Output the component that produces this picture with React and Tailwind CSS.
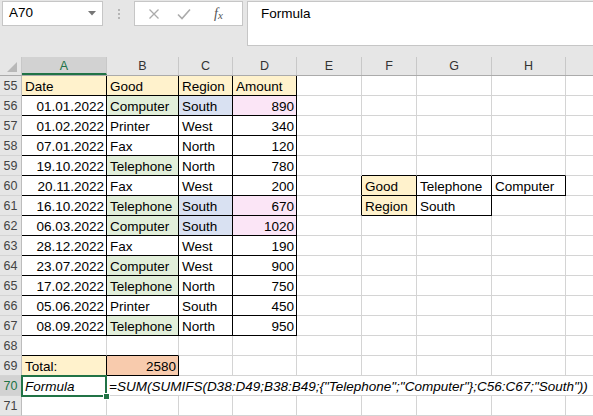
import React from 'react';

const W = ['w-[85px]', 'w-[72px]', 'w-[54px]', 'w-[64px]', 'w-[65px]', 'w-[55px]', 'w-[75px]', 'w-[74px]', 'w-[60px]'];
const LETTERS = ['A', 'B', 'C', 'D', 'E', 'F', 'G', 'H', ''];

const BG = {
  h: 'bg-[#FFF2CC]',
  g: 'bg-[#E2EFDA]',
  b: 'bg-[#D9E1F2]',
  p: 'bg-[#FBE5F6]',
  o: 'bg-[#F8CBAD]',
};

const DATA = {
  55: [['Date', 'h'], ['Good', 'h'], ['Region', 'h'], ['Amount', 'h']],
  56: [['01.01.2022'], ['Computer', 'g'], ['South', 'b'], ['890', 'p']],
  57: [['01.02.2022'], ['Printer'], ['West'], ['340']],
  58: [['07.01.2022'], ['Fax'], ['North'], ['120']],
  59: [['19.10.2022'], ['Telephone', 'g'], ['North'], ['780']],
  60: [['20.11.2022'], ['Fax'], ['West'], ['200'], [''], ['Good', 'h'], ['Telephone'], ['Computer']],
  61: [['16.10.2022'], ['Telephone', 'g'], ['South', 'b'], ['670', 'p'], [''], ['Region', 'h'], ['South']],
  62: [['06.03.2022'], ['Computer', 'g'], ['South', 'b'], ['1020', 'p']],
  63: [['28.12.2022'], ['Fax'], ['West'], ['190']],
  64: [['23.07.2022'], ['Computer', 'g'], ['West'], ['900']],
  65: [['17.02.2022'], ['Telephone', 'g'], ['North'], ['750']],
  66: [['05.06.2022'], ['Printer'], ['South'], ['450']],
  67: [['08.09.2022'], ['Telephone', 'g'], ['North'], ['950']],
  69: [['Total:', 'h'], ['2580', 'o', true]],
};

function borders(r, c) {
  let br = false;
  let bb = false;
  if (r >= 55 && r <= 67 && c <= 3) { br = true; bb = true; }
  if (r === 68 && c <= 1) bb = true;
  if (r === 69 && c <= 1) { br = true; bb = true; }
  if (r === 59 && c >= 5 && c <= 7) bb = true;
  if ((r === 60 || r === 61) && c === 4) br = true;
  if (r === 60 && c >= 5 && c <= 7) { br = true; bb = true; }
  if (r === 61 && (c === 5 || c === 6)) { br = true; bb = true; }
  return [br, bb];
}

function RowHeader({ n, active }) {
  return (
    <div
      className={
        'w-[22px] shrink-0 h-5 border-r border-b border-r-[#BDBDBD] border-b-[#D4D4D4] text-center text-[12.5px] leading-[20px] ' +
        (active ? 'bg-[#D2D2D2] text-[#217346]' : 'bg-[#E6E6E6] text-[#444444]')
      }
    >
      {n}
    </div>
  );
}

function Row({ r }) {
  const d = DATA[r] || [];
  return (
    <div className="flex">
      <RowHeader n={r} />
      {W.map((w, c) => {
        const cell = d[c] || [''];
        const [t, bgk, forceRight] = cell;
        const [br, bb] = borders(r, c);
        const right = forceRight || (r >= 56 && r <= 67 && (c === 0 || c === 3));
        return (
          <div
            key={c}
            className={
              w +
              ' shrink-0 h-5 border-r border-b whitespace-nowrap text-[13.5px] leading-[21px] text-black ' +
              (br ? 'border-r-black ' : 'border-r-[#D4D4D4] ') +
              (bb ? 'border-b-black ' : 'border-b-[#D4D4D4] ') +
              (bgk ? BG[bgk] + ' ' : 'bg-white ') +
              (right ? 'text-right pr-[2px]' : 'text-left pl-[3px]')
            }
          >
            {t}
          </div>
        );
      })}
    </div>
  );
}

export default function App() {
  const rows = [];
  for (let r = 55; r <= 69; r++) rows.push(r);
  return (
    <div
      className="w-[593px] h-[416px] overflow-hidden bg-white select-none"
      style={{ fontFamily: '"Liberation Sans", Arial, sans-serif' }}
    >
      {/* Formula bar */}
      <div className="h-[57px] bg-[#E6E6E6] flex items-start pt-px">
        <div className="ml-[2px] w-[101px] h-[25px] bg-white border border-[#C6C6C6] flex items-center justify-between pl-[6px] pr-[6px]">
          <span className="text-[13.5px] text-black">A70</span>
          <svg width="8" height="5" viewBox="0 0 8 5">
            <path d="M0 0 L8 0 L4 4.5 Z" fill="#767676" />
          </svg>
        </div>
        <div className="w-[31px] h-[25px] flex flex-col items-center justify-center gap-[2px]">
          <div className="w-[2px] h-[2px] bg-[#B5B5B5]" />
          <div className="w-[2px] h-[2px] bg-[#B5B5B5]" />
          <div className="w-[2px] h-[2px] bg-[#B5B5B5]" />
        </div>
        <div className="w-[109px] h-[25px] bg-white border border-[#C6C6C6] flex items-center">
          <svg className="ml-[13px]" width="12" height="12" viewBox="0 0 12 12">
            <path d="M1.5 1.5 L10.5 10.5 M10.5 1.5 L1.5 10.5" stroke="#ABABAB" strokeWidth="1.3" fill="none" />
          </svg>
          <svg className="ml-[17px]" width="14" height="12" viewBox="0 0 14 12">
            <path d="M1 6.5 L5 10.5 L13 1.5" stroke="#ABABAB" strokeWidth="1.6" fill="none" />
          </svg>
          <span
            className="ml-[23px] italic text-[14px] text-[#555555]"
            style={{ fontFamily: '"Liberation Serif", "Times New Roman", serif' }}
          >
            f<span className="text-[11px] relative top-[1px]">x</span>
          </span>
        </div>
        <div className="ml-[4px] flex-1 h-[45px] bg-white border border-r-0 border-[#C6C6C6] pl-[13px] pt-[3px] text-[13.5px] leading-[18px] text-black">
          Formula
        </div>
      </div>

      {/* Column headers */}
      <div className="flex h-[19px] bg-[#E6E6E6] border-b border-[#ABABAB]">
        <div className="w-[22px] shrink-0 h-full border-r border-[#C8C8C8] relative">
          <svg className="absolute left-[6px] top-[4px]" width="12" height="12" viewBox="0 0 12 12">
            <path d="M11 1 L11 11 L1 11 Z" fill="#B8B8B8" />
          </svg>
        </div>
        {W.map((w, c) => (
          <div
            key={c}
            className={
              w +
              ' shrink-0 h-full text-center text-[12.5px] leading-[19px] ' +
              (c === 0
                ? 'bg-[#D2D2D2] text-[#217346] border-b-2 border-b-[#217346] border-r border-r-[#C8C8C8] leading-[18px]'
                : 'text-[#333333] border-r border-r-[#C8C8C8]')
            }
          >
            {LETTERS[c]}
          </div>
        ))}
      </div>

      {rows.map((r) => (
        <Row key={r} r={r} />
      ))}

      {/* Row 70 with active cell and overflowing formula text */}
      <div className="flex">
        <RowHeader n={70} active />
        <div className="w-[85px] shrink-0 h-5 relative border-r border-b border-r-[#D4D4D4] border-b-[#D4D4D4] pl-[3px] text-[13.5px] leading-[21px] italic text-black">
          Formula
          <div className="absolute left-[-1px] top-[-1px] w-[86px] h-[22px] border-2 border-[#217346]" />
          <div className="absolute left-[81px] top-[17px] w-[7px] h-[7px] bg-[#217346] border border-white" />
        </div>
        <div className="flex-1 h-5 border-b border-b-[#D4D4D4] pl-[2px] whitespace-nowrap text-[13.5px] leading-[21px] italic text-black">
          {'=SUM(SUMIFS(D38:D49;B38:B49;{"Telephone";"Computer"};C56:C67;"South"))'}
        </div>
      </div>

      <Row r={71} />
    </div>
  );
}
